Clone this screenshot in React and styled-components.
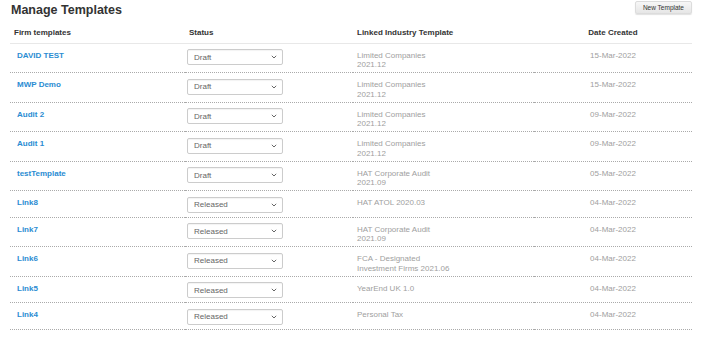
import React from 'react';
import styled, { createGlobalStyle } from 'styled-components';

const templates = [
  { name: 'DAVID TEST', status: 'Draft', linked: ['Limited Companies', '2021.12'], date: '15-Mar-2022' },
  { name: 'MWP Demo', status: 'Draft', linked: ['Limited Companies', '2021.12'], date: '15-Mar-2022' },
  { name: 'Audit 2', status: 'Draft', linked: ['Limited Companies', '2021.12'], date: '09-Mar-2022' },
  { name: 'Audit 1', status: 'Draft', linked: ['Limited Companies', '2021.12'], date: '09-Mar-2022' },
  { name: 'testTemplate', status: 'Draft', linked: ['HAT Corporate Audit', '2021.09'], date: '05-Mar-2022' },
  { name: 'Link8', status: 'Released', linked: ['HAT ATOL 2020.03'], date: '04-Mar-2022' },
  { name: 'Link7', status: 'Released', linked: ['HAT Corporate Audit', '2021.09'], date: '04-Mar-2022' },
  { name: 'Link6', status: 'Released', linked: ['FCA - Designated', 'Investment Firms 2021.06'], date: '04-Mar-2022' },
  { name: 'Link5', status: 'Released', linked: ['YearEnd UK 1.0'], date: '04-Mar-2022' },
  { name: 'Link4', status: 'Released', linked: ['Personal Tax'], date: '04-Mar-2022' },
];

const chevron =
  "data:image/svg+xml;utf8,<svg xmlns='http://www.w3.org/2000/svg' width='6' height='4' viewBox='0 0 6 4'><path d='M0.8 0.8 L3 3 L5.2 0.8' fill='none' stroke='%23666' stroke-width='1'/></svg>";

const App = () => {
  return (
    <>
      <GlobalStyle />
      <Page>
        <TopBar>
          <Title>Manage Templates</Title>
          <NewButton type="button">New Template</NewButton>
        </TopBar>
        <Table>
          <colgroup>
            <col style={{ width: 175 }} />
            <col style={{ width: 168 }} />
            <col style={{ width: 181 }} />
            <col style={{ width: 158 }} />
          </colgroup>
          <thead>
            <tr>
              <HeadCell>Firm templates</HeadCell>
              <HeadCell>Status</HeadCell>
              <HeadCell>Linked Industry Template</HeadCell>
              <HeadCell $center>Date Created</HeadCell>
            </tr>
          </thead>
          <tbody>
            {templates.map((t) => (
              <Row key={t.name}>
                <Cell>
                  <NameLink href="#">{t.name}</NameLink>
                </Cell>
                <SelectCell>
                  <StatusSelect defaultValue={t.status}>
                    <option>Draft</option>
                    <option>Released</option>
                  </StatusSelect>
                </SelectCell>
                <Cell $muted>
                  {t.linked.map((line) => (
                    <div key={line}>{line}</div>
                  ))}
                </Cell>
                <Cell $muted $center>
                  {t.date}
                </Cell>
              </Row>
            ))}
          </tbody>
        </Table>
      </Page>
    </>
  );
};

export default App;

const GlobalStyle = createGlobalStyle`
  body {
    margin: 0;
    background: #ffffff;
    font-family: "Liberation Sans", Arial, sans-serif;
  }
`;

const Page = styled.div`
  width: 682px;
  padding-left: 10px;
`;

const TopBar = styled.div`
  display: flex;
  justify-content: space-between;
  align-items: flex-start;
  height: 22px;
`;

const Title = styled.h2`
  margin: 0;
  padding-left: 1px;
  font-size: 12.5px;
  line-height: 20px;
  font-weight: bold;
  color: #333333;
`;

const NewButton = styled.button`
  margin-top: 1px;
  height: 13px;
  padding: 0 7px;
  font-family: "Liberation Sans", Arial, sans-serif;
  font-size: 6.5px;
  color: #333333;
  background: linear-gradient(#f7f7f7, #e6e6e6);
  border: 1px solid #dcdcdc;
  border-radius: 2px;
  box-shadow: 0 1px 1px rgba(0, 0, 0, 0.12);
`;

const Table = styled.table`
  width: 682px;
  table-layout: fixed;
  border-collapse: collapse;
  font-size: 8px;
  line-height: 9.5px;
`;

const HeadCell = styled.th`
  padding: 6px 4px 4.5px;
  line-height: 10px;
  text-align: ${(p) => (p.$center ? 'center' : 'left')};
  font-weight: bold;
  color: #333333;
  border-bottom: 1px solid #e8e8e8;
`;

const Row = styled.tr`
  border-bottom: 1px dotted #aaaaaa;
`;

const Cell = styled.td`
  padding: 7px 4px 2.5px;
  vertical-align: top;
  text-align: ${(p) => (p.$center ? 'center' : 'left')};
  color: ${(p) => (p.$muted ? '#a0a0a0' : '#333333')};
`;

const SelectCell = styled.td`
  padding: 5.5px 2px 4px;
  vertical-align: top;
`;

const NameLink = styled.a`
  padding-left: 3px;
  font-weight: bold;
  color: #2a8cd2;
  text-decoration: none;
`;

const StatusSelect = styled.select`
  display: block;
  width: 96px;
  height: 16px;
  padding: 0 0 0 6px;
  font-family: "Liberation Sans", Arial, sans-serif;
  font-size: 8px;
  color: #666666;
  background: #ffffff url("${chevron}") no-repeat right 5px center;
  border: 1px solid #cccccc;
  border-radius: 2px;
  box-shadow: inset 0 1px 1px rgba(0, 0, 0, 0.05);
  appearance: none;
  outline: none;
`;
